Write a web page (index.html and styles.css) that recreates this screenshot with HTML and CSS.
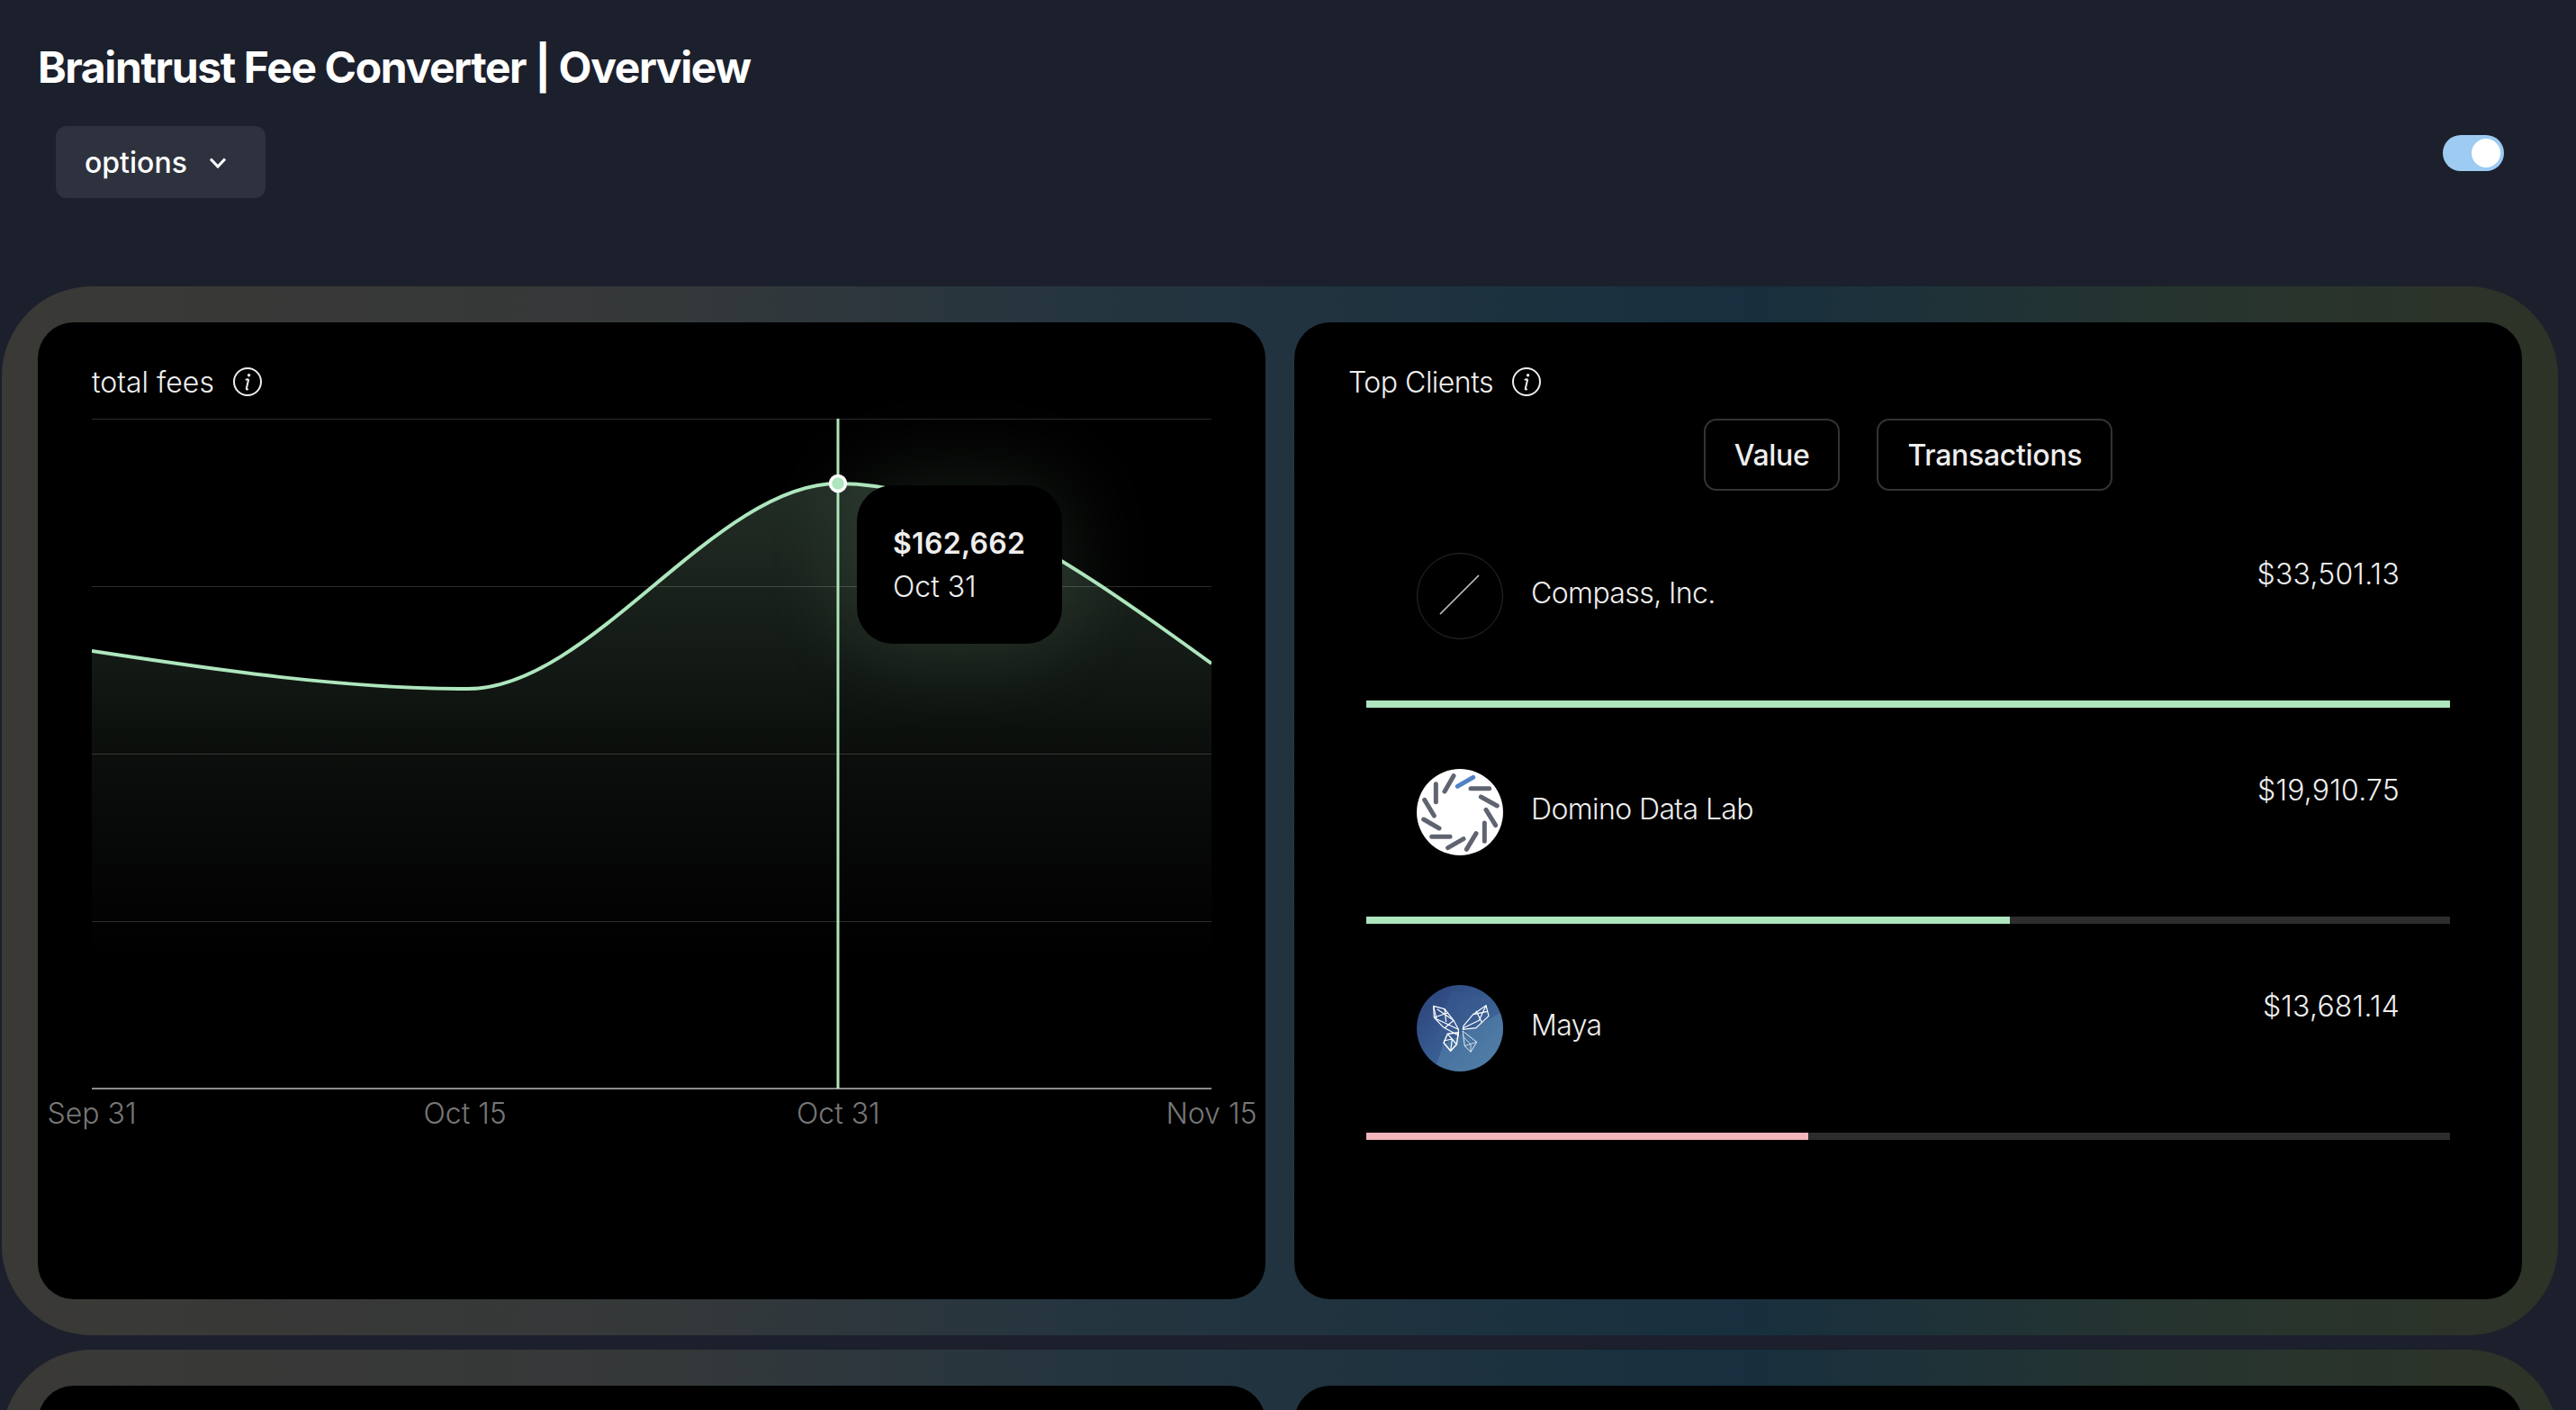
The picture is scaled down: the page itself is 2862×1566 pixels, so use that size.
FILE: index.html
```html
<!DOCTYPE html>
<html lang="en">
<head>
<meta charset="utf-8">
<title>Braintrust Fee Converter | Overview</title>
<link rel="stylesheet" href="styles.css">
</head>
<body>
<div class="app">
  <header class="header">
    <h1 class="title">Braintrust Fee Converter | Overview</h1>
    <div class="toolbar">
      <button class="menu-btn" type="button">options
        <svg class="chevron" viewBox="0 0 18 12"><polyline points="1,1.5 9,10 17,1.5"/></svg>
      </button>
      <span class="toggle"><span class="knob"></span></span>
    </div>
  </header>

  <section class="panel">
    <article class="card chart-card">
      <div class="card-title">total fees
        <svg class="info" viewBox="0 0 32 32"><circle cx="16" cy="16" r="15"/><path d="M17.2 13.2 L14.8 23.5 Q14.6 25.2 16.8 24.2"/><path d="M13.8 14 Q15.5 13 17.2 13.2"/><circle class="dot" cx="17.6" cy="8.8" r="1.7"/></svg>
      </div>
      <div class="chart">
        <svg class="plot" viewBox="102 465 1244 745" width="1244" height="745">
          <defs>
            <linearGradient id="area" gradientUnits="userSpaceOnUse" x1="0" y1="537" x2="0" y2="1209">
              <stop offset="0" stop-color="#aee6bd" stop-opacity=".2"/>
              <stop offset=".42" stop-color="#aee6bd" stop-opacity=".07"/>
              <stop offset=".78" stop-color="#aee6bd" stop-opacity="0"/>
            </linearGradient>
          </defs>
          <path class="fill" d="M102 723 C241 744 380 765 520 765 C657 765 794 537 931 537 C1069 537 1208 637 1346 737 L1346 1209 L102 1209 Z"/>
          <g class="grid">
            <line x1="102" x2="1346" y1="465.5" y2="465.5"/>
            <line x1="102" x2="1346" y1="651.5" y2="651.5"/>
            <line x1="102" x2="1346" y1="837.5" y2="837.5"/>
            <line x1="102" x2="1346" y1="1023.5" y2="1023.5"/>
          </g>
          <line class="axis" x1="102" x2="1346" y1="1209" y2="1209"/>
          <path class="curve" d="M102 723 C241 744 380 765 520 765 C657 765 794 537 931 537 C1069 537 1208 637 1346 737"/>
          <line class="cursor" x1="931" x2="931" y1="465" y2="1209"/>
          <circle class="marker" cx="931" cy="537" r="8.5"/>
        </svg>
        <div class="tooltip">
          <div class="tip-value">$162,662</div>
          <div class="tip-date">Oct 31</div>
        </div>
      </div>
      <div class="ticks">
        <span class="tick">Sep 31</span>
        <span class="tick">Oct 15</span>
        <span class="tick">Oct 31</span>
        <span class="tick">Nov 15</span>
      </div>
    </article>

    <article class="card clients-card">
      <div class="card-title">Top Clients
        <svg class="info" viewBox="0 0 32 32"><circle cx="16" cy="16" r="15"/><path d="M17.2 13.2 L14.8 23.5 Q14.6 25.2 16.8 24.2"/><path d="M13.8 14 Q15.5 13 17.2 13.2"/><circle class="dot" cx="17.6" cy="8.8" r="1.7"/></svg>
      </div>
      <div class="tabs">
        <button class="tab" type="button">Value</button>
        <button class="tab" type="button">Transactions</button>
      </div>
      <div class="clients">
        <div class="client">
          <div class="client-main">
            <svg class="avatar" viewBox="0 0 96 96"><circle cx="48" cy="48" r="47.5" fill="none" stroke="#2b2b2b" stroke-width="1"/><line x1="26" y1="68" x2="69" y2="25" stroke="#c9c9c9" stroke-width="1.6"/></svg>
            <span class="client-name">Compass, Inc.</span>
            <span class="client-value">$33,501.13</span>
          </div>
          <div class="bar"><div class="bar-fill green" style="width:100%"></div></div>
        </div>
        <div class="client">
          <div class="client-main">
            <svg class="avatar" viewBox="132 42 288 288">
              <circle cx="276" cy="186" r="144" fill="#fff"/>
              <g fill="none" stroke="#5f6470" stroke-width="15" stroke-linecap="round">
                <line x1="225" y1="117" x2="255" y2="65"/>
                <line x1="196" y1="92" x2="196" y2="152"/>
                <line x1="158" y1="145" x2="190" y2="198"/>
                <line x1="155" y1="210" x2="207" y2="240"/>
                <line x1="182" y1="268" x2="243" y2="268"/>
                <line x1="236" y1="305" x2="288" y2="275"/>
                <line x1="298" y1="310" x2="330" y2="257"/>
                <line x1="358" y1="222" x2="358" y2="283"/>
                <line x1="363" y1="178" x2="395" y2="230"/>
                <line x1="346" y1="135" x2="400" y2="165"/>
                <line x1="312" y1="107" x2="374" y2="107"/>
                <line x1="268" y1="100" x2="320" y2="70" stroke="#4f83c4"/>
              </g>
            </svg>
            <span class="client-name">Domino Data Lab</span>
            <span class="client-value">$19,910.75</span>
          </div>
          <div class="bar"><div class="bar-fill green" style="width:59.4%"></div></div>
        </div>
        <div class="client">
          <div class="client-main">
            <svg class="avatar" viewBox="102 42 288 288">
              <defs>
                <linearGradient id="maya" x1="0" y1="0" x2="1" y2="1">
                  <stop offset="0" stop-color="#2a4079"/>
                  <stop offset=".55" stop-color="#3a5f93"/>
                  <stop offset="1" stop-color="#4f7ba5"/>
                </linearGradient>
                <clipPath id="mayaClip"><circle cx="246" cy="186" r="144"/></clipPath>
              </defs>
              <circle cx="246" cy="186" r="144" fill="url(#maya)"/>
              <g clip-path="url(#mayaClip)">
                <path d="M215 60 L390 90 L390 130 L160 230 Z" fill="#3d5f96" opacity=".3"/>
                <path d="M160 330 L190 240 L390 130 L390 330 Z" fill="#5585ab" opacity=".5"/>
              </g>
              <g fill="none" stroke="#fff" stroke-width="3.6" stroke-linejoin="round">
                <path d="M158 112 L195 122 L225 160 L241 190 L241 210 L190 182 L160 150 Z"/>
                <path d="M158 112 L168 155 L241 190 M195 122 L200 165 M160 150 L205 135 M170 122 L225 160 M195 185 L225 160"/>
                <path d="M241 200 L235 240 L215 262 L192 235 L205 205 Z" stroke-width="4.4"/>
                <path d="M192 228 L220 222 L235 240 M220 222 L215 262 M205 205 L220 222"/>
                <path d="M333 110 L342 145 L300 185 L256 190 L258 178 L290 140 Z"/>
                <path d="M333 110 L310 160 L256 186 M290 140 L338 130 M300 128 L320 168"/>
                <path d="M255 195 L302 232 L282 265 L262 245 Z" stroke-width="2.6"/>
                <path d="M262 245 L302 232 M258 215 L282 240 L282 265" stroke-width="2.2"/>
              </g>
            </svg>
            <span class="client-name">Maya</span>
            <span class="client-value">$13,681.14</span>
          </div>
          <div class="bar"><div class="bar-fill pink" style="width:40.8%"></div></div>
        </div>
      </div>
    </article>
  </section>

  <section class="panel">
    <article class="card"></article>
    <article class="card"></article>
  </section>
</div>
</body>
</html>
```

FILE: styles.css
```css
* { box-sizing: border-box; }
html, body { margin: 0; height: 100%; }
body {
  background: #1c202c;
  color: #fff;
  font-family: Inter, "Liberation Sans", sans-serif;
  overflow: hidden;
}
.app { height: 1566px; overflow: hidden; }

.header { padding-top: 47px; margin-bottom: 98px; }
.title {
  margin: 0 0 37px 42px;
  font-size: 48px;
  line-height: 56px;
  font-weight: 700;
  letter-spacing: -1.4px;
}
.toolbar {
  display: flex;
  justify-content: space-between;
  align-items: flex-start;
  padding: 0 80px 0 62px;
}
.menu-btn {
  display: flex;
  align-items: center;
  gap: 25px;
  width: 233px;
  height: 80px;
  padding: 2px 0 0 32px;
  border: 0;
  border-radius: 12px;
  background: #2d323e;
  color: #fff;
  font: 500 32px/1 Inter, sans-serif;
}
.chevron { width: 18px; height: 12px; fill: none; stroke: #fff; stroke-width: 3; }
.toggle {
  display: flex;
  justify-content: flex-end;
  align-items: center;
  width: 68px;
  height: 40px;
  margin-top: 10px;
  padding-right: 4px;
  border-radius: 20px;
  background: #9dcbf1;
}
.knob { width: 32px; height: 32px; border-radius: 50%; background: #fff; }

.panel {
  display: grid;
  grid-template-columns: 1fr 1fr;
  gap: 32px;
  width: 2840px;
  margin: 0 0 16px 2px;
  padding: 40px;
  border-radius: 100px;
  background: linear-gradient(90deg, #3a3936 0%, #353839 25%, #25353f 42%, #172f3e 68%, #26342f 85%, #2e3327 100%);
}
.card {
  height: 1085px;
  padding: 42px 60px 0;
  border-radius: 40px;
  background: #000;
}
.card-title {
  display: flex;
  align-items: center;
  gap: 21px;
  height: 48px;
  font-size: 32px;
  font-weight: 300;
  color: #f0f0f0;
}
.clients-card .card-title { letter-spacing: -0.5px; }
.info { width: 32px; height: 32px; fill: none; stroke: #eee; stroke-width: 2; }
.info .dot { fill: #eee; stroke: none; }

.chart { position: relative; margin-top: 17px; height: 745px; }
.plot { display: block; }
.fill { fill: url(#area); }
.grid line { stroke: rgba(255, 255, 255, .17); stroke-width: 1; }
.axis { stroke: #8a8a8a; stroke-width: 2; }
.curve { fill: none; stroke: #aee6bd; stroke-width: 4; }
.cursor { stroke: #aee6bd; stroke-width: 3; }
.marker { fill: #aee6bd; stroke: #fff; stroke-width: 3.5; }
.tooltip {
  position: absolute;
  left: 850px;
  top: 74px;
  width: 228px;
  height: 176px;
  padding: 41px 0 0 40px;
  border-radius: 40px;
  background: #000;
  box-shadow: 0 0 100px 6px rgba(174, 230, 189, .13);
  color: #eee;
  font-size: 32px;
}
.tip-value { font-weight: 600; line-height: 48px; letter-spacing: 0.3px; }
.tip-date { font-weight: 300; line-height: 48px; }

.ticks { display: flex; justify-content: space-between; margin-top: 3px; }
.tick {
  display: flex;
  justify-content: center;
  width: 0;
  white-space: nowrap;
  font-size: 32px;
  font-weight: 300;
  line-height: 48px;
  color: #777;
}

.tabs { display: flex; justify-content: center; gap: 41px; margin-top: 17px; }
.tab {
  height: 80px;
  padding: 2px 32px 0;
  border: 2.5px solid #333;
  border-radius: 14px;
  background: #000;
  color: #eee;
  font: 500 32px/1 Inter, sans-serif;
  letter-spacing: -0.3px;
}
.clients { margin: 1px 20px 0 20px; }
.client { padding-top: 68px; height: 240px; }
.client-main {
  display: flex;
  align-items: center;
  height: 96px;
  margin-bottom: 68px;
  padding: 0 56px 0 56px;
}
.avatar { width: 96px; height: 96px; flex: none; }
.client-name {
  margin-left: 31px;
  padding-bottom: 8px;
  font-size: 32px;
  font-weight: 300;
  letter-spacing: -0.6px;
  color: #eee;
}
.client-value {
  align-self: flex-start;
  margin-left: auto;
  font-size: 32px;
  font-weight: 300;
  line-height: 48px;
  letter-spacing: 0.2px;
  color: #eee;
}
.bar { height: 8px; background: #2d2d2d; }
.bar-fill { height: 100%; }
.green { background: #aee6bd; }
.pink { background: #f2b5bb; }
```
